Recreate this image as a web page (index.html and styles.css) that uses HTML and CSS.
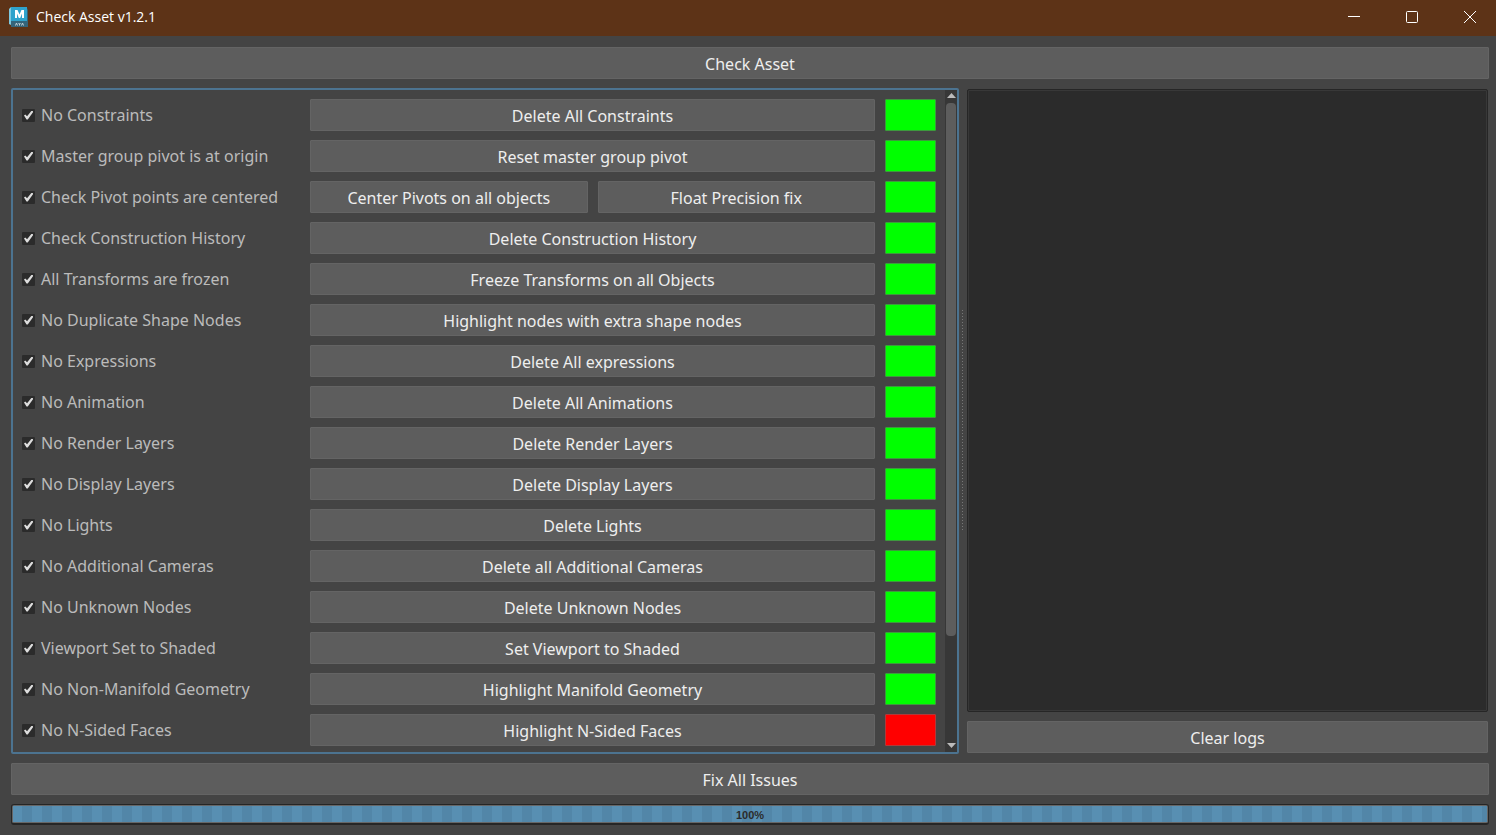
FILE: index.html
```
<!DOCTYPE html>
<html lang="en">
<head>
<meta charset="utf-8">
<title>Check Asset v1.2.1</title>
<link rel="stylesheet" href="styles.css">
</head>
<body>
<header class="titlebar">
  <svg class="logo" viewBox="0 0 20 20" aria-hidden="true">
    <path fill="#7fc8de" d="M0 2l2-2v18l-2-1z"/>
    <path fill="#35647a" d="M2 1h16l1 2v17H2z"/>
    <path fill="#2fa3cc" d="M2 0h16v14H2z"/>
    <path fill="#fff" d="M6 11V3h2.500l2 4.500 2-4.500H15v8h-2V6.500L11.200 11H9.800L8 6.500V11z"/>
    <path fill="none" stroke="#c3d2d9" d="M6.500 18.500l1-2.500 1 2.500M9.500 16l1 1.200 1-1.200M10.500 17v1.500M12.500 18.500l1-2.500 1 2.500"/>
  </svg>
  <h1 class="title">Check Asset v1.2.1</h1>
  <div class="controls">
    <button class="control" aria-label="Minimize"><svg viewBox="0 0 12 12"><path d="M0 5.500h12"/></svg></button>
    <button class="control" aria-label="Maximize"><svg viewBox="0 0 12 12"><rect x=".5" y=".5" width="11" height="11" rx="1"/></svg></button>
    <button class="control" aria-label="Close"><svg viewBox="0 0 12 12"><path d="M0 0l12 12M12 0L0 12"/></svg></button>
  </div>
</header>
<main class="window">
  <button class="button">Check Asset</button>
  <div class="split">
    <section class="checks">
      <div class="rows">
        <div class="row"><label class="check"><input type="checkbox" checked>No Constraints</label><div class="actions"><button class="button">Delete All Constraints</button></div><span class="status"></span></div>
        <div class="row"><label class="check"><input type="checkbox" checked>Master group pivot is at origin</label><div class="actions"><button class="button">Reset master group pivot</button></div><span class="status"></span></div>
        <div class="row"><label class="check"><input type="checkbox" checked>Check Pivot points are centered</label><div class="actions"><button class="button">Center Pivots on all objects</button><button class="button">Float Precision fix</button></div><span class="status"></span></div>
        <div class="row"><label class="check"><input type="checkbox" checked>Check Construction History</label><div class="actions"><button class="button">Delete Construction History</button></div><span class="status"></span></div>
        <div class="row"><label class="check"><input type="checkbox" checked>All Transforms are frozen</label><div class="actions"><button class="button">Freeze Transforms on all Objects</button></div><span class="status"></span></div>
        <div class="row"><label class="check"><input type="checkbox" checked>No Duplicate Shape Nodes</label><div class="actions"><button class="button">Highlight nodes with extra shape nodes</button></div><span class="status"></span></div>
        <div class="row"><label class="check"><input type="checkbox" checked>No Expressions</label><div class="actions"><button class="button">Delete All expressions</button></div><span class="status"></span></div>
        <div class="row"><label class="check"><input type="checkbox" checked>No Animation</label><div class="actions"><button class="button">Delete All Animations</button></div><span class="status"></span></div>
        <div class="row"><label class="check"><input type="checkbox" checked>No Render Layers</label><div class="actions"><button class="button">Delete Render Layers</button></div><span class="status"></span></div>
        <div class="row"><label class="check"><input type="checkbox" checked>No Display Layers</label><div class="actions"><button class="button">Delete Display Layers</button></div><span class="status"></span></div>
        <div class="row"><label class="check"><input type="checkbox" checked>No Lights</label><div class="actions"><button class="button">Delete Lights</button></div><span class="status"></span></div>
        <div class="row"><label class="check"><input type="checkbox" checked>No Additional Cameras</label><div class="actions"><button class="button">Delete all Additional Cameras</button></div><span class="status"></span></div>
        <div class="row"><label class="check"><input type="checkbox" checked>No Unknown Nodes</label><div class="actions"><button class="button">Delete Unknown Nodes</button></div><span class="status"></span></div>
        <div class="row"><label class="check"><input type="checkbox" checked>Viewport Set to Shaded</label><div class="actions"><button class="button">Set Viewport to Shaded</button></div><span class="status"></span></div>
        <div class="row"><label class="check"><input type="checkbox" checked>No Non-Manifold Geometry</label><div class="actions"><button class="button">Highlight Manifold Geometry</button></div><span class="status"></span></div>
        <div class="row"><label class="check"><input type="checkbox" checked>No N-Sided Faces</label><div class="actions"><button class="button">Highlight N-Sided Faces</button></div><span class="status failed"></span></div>
      </div>
      <div class="scrollbar" aria-hidden="true">
        <svg class="arrow" viewBox="0 0 9 5"><path d="M0 5l4.500-5L9 5z"/></svg>
        <div class="track"><div class="thumb"></div></div>
        <svg class="arrow" viewBox="0 0 9 5"><path d="M0 0l4.500 5L9 0z"/></svg>
      </div>
    </section>
    <div class="splitter"></div>
    <section class="logs">
      <textarea class="log" readonly aria-label="Logs"></textarea>
      <button class="button">Clear logs</button>
    </section>
  </div>
  <button class="button">Fix All Issues</button>
  <div class="progress" role="progressbar" aria-label="Progress" aria-valuemin="0" aria-valuemax="100" aria-valuenow="100"><div class="bar">100%</div></div>
</main>
</body>
</html>
```
FILE: styles.css
```
* { box-sizing: border-box; }

body {
  display: flex;
  flex-direction: column;
  min-height: 100vh;
  margin: 0;
  background: #444;
  color: #bbb;
  font: 16px/20px "Noto Sans", sans-serif;
}

button, textarea { font: inherit; margin: 0; }

.titlebar {
  display: flex;
  align-items: center;
  height: 36px;
  padding: 0 4px 2px 9px;
  background: #5d3317;
  color: #fff;
}

.logo { width: 20px; height: 20px; margin-right: 7px; }
.title { flex: 1; margin: 0; font: 14px/20px "Open Sans", sans-serif; }
.controls { display: flex; gap: 14px; }

.control {
  display: flex;
  align-items: center;
  justify-content: center;
  width: 44px;
  height: 34px;
  padding: 0;
  border: 0;
  background: none;
}

.control svg { width: 12px; height: 12px; fill: none; stroke: #fff; }

.window {
  flex: 1;
  display: flex;
  flex-direction: column;
  gap: 9px;
  padding: 11px 7px 10px 11px;
}

.button {
  height: 32px;
  padding: 2px 8px 0;
  border: 1px solid #646464;
  border-radius: 1px;
  background: #5d5d5d;
  color: #eee;
}

.split {
  flex: 1;
  display: grid;
  grid-template-columns: 948fr 8px 522fr;
}

.checks {
  display: flex;
  border: 2px solid #4c7390;
  border-radius: 2px;
}

.rows {
  flex: 1;
  display: flex;
  flex-direction: column;
  gap: 9px;
  padding: 9px 9px 6px;
}

.row {
  display: grid;
  grid-template-columns: 278px 1fr 51px;
  gap: 10px;
}

.check { display: flex; align-items: center; gap: 6px; }

.check input {
  appearance: none;
  width: 13px;
  height: 13px;
  margin: 0;
  border-radius: 1px;
  background: #2b2b2b;
  display: grid;
  place-items: center;
}

.check input:checked::before {
  content: "";
  width: 9px;
  height: 9px;
  background: #ddd;
  clip-path: polygon(0 55%, 14% 44%, 34% 64%, 86% 0, 100% 8%, 100% 20%, 42% 100%, 28% 100%);
}

.actions { display: flex; gap: 10px; }
.actions .button { flex: 1; }

.status {
  border: 1px solid #3d9a3d;
  border-radius: 1px;
  background: #0f0;
}

.failed { border-color: #b03a3a; background: #f00; }

.scrollbar {
  display: flex;
  flex-direction: column;
  align-items: center;
  gap: 5px;
  width: 12px;
  padding: 3px 0 4px;
  background: #373737;
}

.arrow { width: 9px; height: 5px; fill: #bbb; }
.track { flex: 1; width: 10px; }
.thumb { height: 84%; border-radius: 4px; background: #5d5d5d; }

.splitter {
  padding: 0 4px 0 3px;
  display: flex;
  align-items: center;
}

.splitter::before {
  content: "";
  width: 1px;
  height: 33.3%;
  background: repeating-linear-gradient(#777 0 1px, transparent 1px 3px);
}

.logs {
  display: flex;
  flex-direction: column;
  gap: 9px;
  padding: 1px 1px 1px 0;
}

.log {
  flex: 1;
  width: 100%;
  border: 1px solid #262626;
  border-radius: 2px;
  outline: 1px solid #383838;
  outline-offset: -2px;
  background: #2b2b2b;
  color: #ccc;
  resize: none;
}

.progress {
  height: 21px;
  padding: 1px;
  border: 1px solid #262626;
  border-bottom-width: 2px;
  border-radius: 3px;
  background: #666;
}

.bar {
  height: 100%;
  background: repeating-linear-gradient(90deg, #588fb2 0 9px, #5286a8 9px 19px, #588fb2 19px 20px);
  color: #2b2b2b;
  font: bold 11px/18px "Liberation Sans", sans-serif;
  text-align: center;
}
```
